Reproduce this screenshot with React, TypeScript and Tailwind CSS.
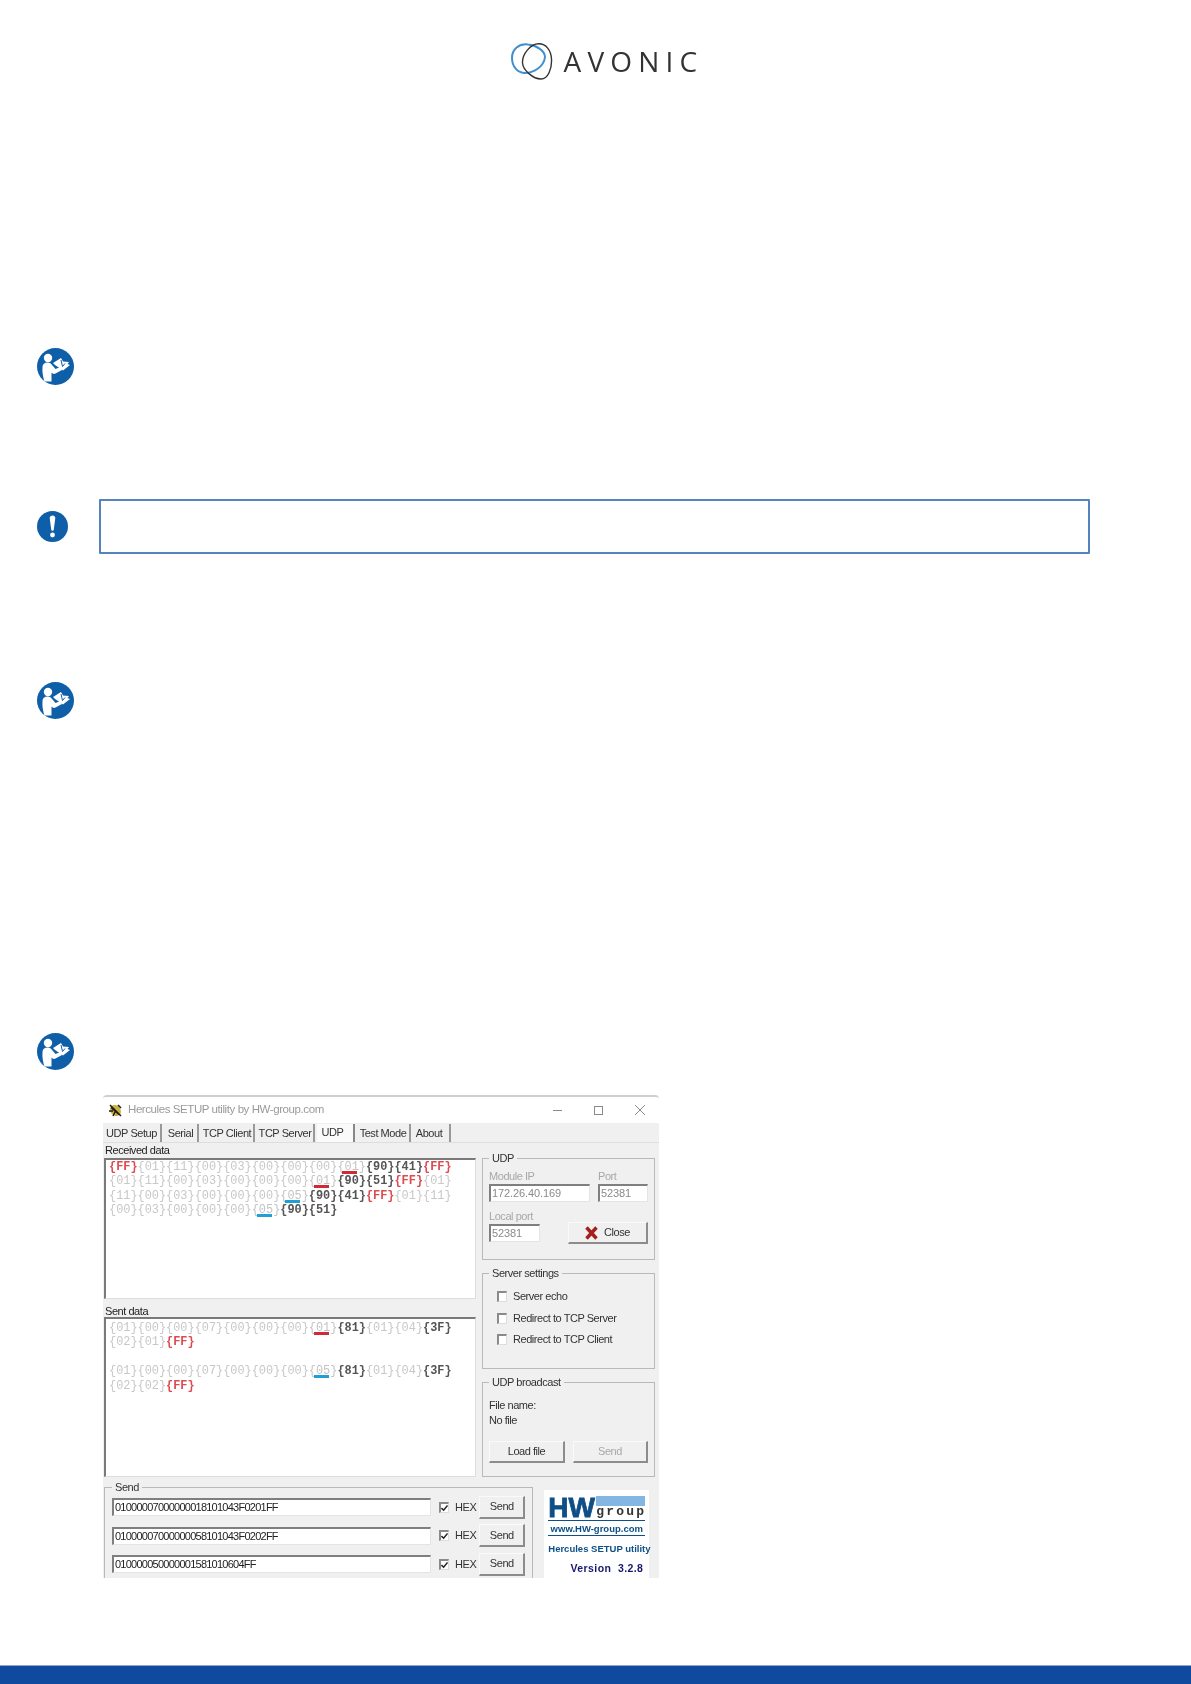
const receivedLines = [
  "r:FF g:01 g:11 g:00 g:03 g:00 g:00 g:00 u:01 d:90 d:41 r:FF",
  "g:01 g:11 g:00 g:03 g:00 g:00 g:00 u:01 d:90 d:51 r:FF g:01",
  "g:11 g:00 g:03 g:00 g:00 g:00 b:05 d:90 d:41 r:FF g:01 g:11",
  "g:00 g:03 g:00 g:00 g:00 b:05 d:90 d:51",
];

const sentLines = [
  "g:01 g:00 g:00 g:07 g:00 g:00 g:00 u:01 d:81 g:01 g:04 d:3F",
  "g:02 g:01 r:FF",
  "",
  "g:01 g:00 g:00 g:07 g:00 g:00 g:00 b:05 d:81 g:01 g:04 d:3F",
  "g:02 g:02 r:FF",
];

const tabs = [
  { label: "UDP Setup", w: "w-[59px]" },
  { label: "Serial", w: "w-[35px]" },
  { label: "TCP Client", w: "w-[54px]" },
  { label: "TCP Server", w: "w-[58px]" },
  { label: "UDP", w: "w-[38px] pr-[5px]", active: true },
  { label: "Test Mode", w: "w-[54px]" },
  { label: "About", w: "w-[38px] pr-[4px]" },
];

const sendRows = ["01000007000000018101043F0201FF", "01000007000000058101043F0202FF", "010000050000001581010604FF"];

function BookIcon() {
  return (
    <svg width="37" height="37" viewBox="0 0 37 37" className="block ml-[37px]">
      <circle cx="18.5" cy="18.5" r="18.5" fill="#0f5ea8" />
      <circle cx="11" cy="10" r="4.200" fill="#fff" />
      <path d="M5.5 19c0-3 2-4.500 5-4.500 2.500 0 3.500 1 5 3l3 3.500 5-2 1.500 3-6.500 3.500c-1.500.8-3 .3-4-1v9h-7c-1.500-4-2.500-10-2-14z" fill="#fff" />
      <path d="M16 15l8-5 2 3.500 6 .5-1.500 2 2.500 1-7 5.500-5-3.500-3-2z" fill="#fff" />
      <path d="M24 12l1.500 6.500M28 15.500l-2.500 3" stroke="#0f5ea8" strokeWidth="1" fill="none" />
    </svg>
  );
}

function WarnIcon() {
  return (
    <svg width="31" height="31" viewBox="0 0 31 31" className="block">
      <circle cx="15.5" cy="15.5" r="15.5" fill="#0f5ea8" />
      <path d="M12.700 7c0-1.600 1.200-2.500 2.800-2.500s2.800.9 2.800 2.500l-1.500 11.500c-.1.9-.6 1.300-1.300 1.300s-1.200-.4-1.300-1.300z" fill="#fff" />
      <circle cx="15.500" cy="24" r="2.400" fill="#fff" />
    </svg>
  );
}

function Logo() {
  return (
    <div className="flex items-center justify-center pl-[23px] gap-[11px] h-[37px] blur-[0.4px]">
      <svg width="42" height="37" viewBox="0 0 42 37" fill="none">
        <path d="M17 1.500C8 .5 1 6 1 15c0 9 6 15 13 15 8 0 19-6 20-16 0-6-9-12-17-12.500z" stroke="#3f8fd0" strokeWidth="2" />
        <path d="M28 .8C20 .5 11 11 11.500 20c.5 7 10.500 16 18.500 16 7 0 11-10 10.500-20C40 7 35 1 28 .8z" stroke="#333" strokeWidth="1.400" />
      </svg>
      <span className="font-['Open_Sans',sans-serif] font-normal text-[28px] leading-none tracking-[6.200px] text-[#333] -translate-y-px">AVONIC</span>
    </div>
  );
}

function HexToken({ token }: { token: string }) {
  const [kind, value] = token.split(":");
  if (kind === "u" || kind === "b") {
    return (
      <span className="relative inline-block text-[#c4c4c4]">
        {`{${value}}`}
        <span className={`absolute left-[5px] top-[11px] w-[15px] h-[3px] ${kind === "u" ? "bg-[#cf2a36]" : "bg-[#1f9fd6]"}`} />
      </span>
    );
  }
  const color = kind === "r" ? "text-[#dd4a50] font-bold" : kind === "d" ? "text-[#555] font-bold" : "text-[#c8c8c8]";
  return <span className={color}>{`{${value}}`}</span>;
}

function HexBox({ lines, className }: { lines: string[]; className: string }) {
  return (
    <div className={`bg-white border-t-2 border-l-2 border-[#7a7a7a] border-r border-b border-r-[#ddd] border-b-[#ddd] pl-[3px] font-['Liberation_Mono',monospace] text-[11.9px] tracking-normal leading-[14.4px] ${className}`}>
      {lines.map((line, i) => (
        <div key={i} className="h-[14.400px] whitespace-pre">
          {line.split(" ").filter(Boolean).map((t, j) => (
            <HexToken key={j} token={t} />
          ))}
        </div>
      ))}
    </div>
  );
}

function Field({ value, className, muted }: { value: string; className: string; muted?: boolean }) {
  return (
    <div className={`bg-white border-t-2 border-l-2 border-[#7f7f7f] border-r border-b border-r-[#e4e4e4] border-b-[#e4e4e4] pl-[1px] leading-[15px] ${muted ? "text-[#8a8a8a] tracking-[-0.1px]" : "text-[#222] tracking-[-0.75px]"} ${className}`}>
      {value}
    </div>
  );
}

function WinButton({ children, className, muted }: { children: React.ReactNode; className: string; muted?: boolean }) {
  return (
    <div className={`flex items-center justify-center bg-[#f0f0f0] border-t border-l border-t-[#fafafa] border-l-[#fafafa] border-r-2 border-b-2 border-[#8c8c8c] ${muted ? "text-[#a8a8a8]" : "text-[#333]"} ${className}`}>
      {children}
    </div>
  );
}

function Check({ label, checked }: { label?: string; checked?: boolean }) {
  return (
    <div className="flex items-center gap-[6px] h-[13px]">
      <div className="w-[10px] h-[11px] bg-white border-t-2 border-l-2 border-[#8a8a8a] border-r border-b border-r-[#ddd] border-b-[#ddd] flex items-center justify-center">
        {checked && (
          <svg width="8" height="8" viewBox="0 0 8 8" fill="none">
            <path d="M.5 4l2.500 2.500L7.500 1" stroke="#222" strokeWidth="1.800" />
          </svg>
        )}
      </div>
      {label && <span>{label}</span>}
    </div>
  );
}

function Group({ title, className, children }: { title: string; className: string; children: React.ReactNode }) {
  return (
    <fieldset className={`border border-[#b9b9b9] ${className}`}>
      <legend className="px-[3px] h-[14px] leading-[14px] text-[#333]">{title}</legend>
      {children}
    </fieldset>
  );
}

function HerculesWindow() {
  return (
    <div className="ml-[103px] mt-[25px] w-[556px] h-[483px] overflow-hidden rounded-t-[4px] border-t-2 border-t-[#cfcfcf] bg-[#f0f0f0] flex flex-col font-['Liberation_Sans',sans-serif] text-[11px] tracking-[-0.45px] blur-[0.35px]">
      <div className="h-[26px] shrink-0 bg-white flex items-center pl-[5px]">
        <svg width="15" height="15" viewBox="0 0 15 15">
          <ellipse cx="7.500" cy="7.500" rx="5" ry="6" fill="#c9b23a" transform="rotate(-40 7.500 7.500)" />
          <path d="M2 2l11 11M1 8h4M10 2l3 3M5 13l3-6M3 4.500l8 7" stroke="#1c1c1c" strokeWidth="1.500" fill="none" />
        </svg>
        <span className="ml-[5px] text-[11.500px] tracking-[-0.42px] text-[#9a9a9a]">Hercules SETUP utility by HW-group.com</span>
        <div className="ml-auto flex items-center pr-[14px] gap-[32px]">
          <div className="w-[9px] h-px bg-[#8a8a8a]" />
          <div className="w-[9px] h-[9px] border border-[#8a8a8a]" />
          <svg width="10" height="10" viewBox="0 0 10 10">
            <path d="M0 0l10 10M10 0L0 10" stroke="#8a8a8a" strokeWidth="1" />
          </svg>
        </div>
      </div>

      <div className="h-[20px] shrink-0 flex items-end gap-[2px] border-b border-[#dedede]">
        {tabs.map((tab) => (
          <div
            key={tab.label}
            className={`${tab.w} h-[18px] flex items-center justify-center whitespace-nowrap border-r-2 ${tab.active ? "bg-[#fafafa] border-[#888] pb-[2px]" : "border-[#999]"} text-[#333]`}
          >
            {tab.label}
          </div>
        ))}
      </div>

      <div className="flex shrink-0 pl-[1px] pr-[3px] h-[337px]">
        <div className="w-[372px] flex flex-col">
          <div className="h-[15px] leading-[15px] pl-[1px] text-[#222]">Received data</div>
          <HexBox lines={receivedLines} className="h-[141px]" />
          <div className="h-[18px] leading-[24px] pl-[1px] text-[#222]">Sent data</div>
          <HexBox lines={sentLines} className="h-[160px] pt-[2px]" />
        </div>
        <div className="ml-[6px] w-[173px] pt-[8px] flex flex-col gap-[6px] text-[#333]">
          <Group title="UDP" className="h-[109px] px-[6px]">
            <div className="flex gap-[8px] mt-[4px]">
              <div className="w-[101px]">
                <div className="h-[15px] leading-[15px] text-[#a8a8a8]">Module IP</div>
                <Field value="172.26.40.169" muted className="h-[18px]" />
              </div>
              <div className="w-[50px]">
                <div className="h-[15px] leading-[15px] text-[#a8a8a8]">Port</div>
                <Field value="52381" muted className="h-[18px]" />
              </div>
            </div>
            <div className="flex items-end justify-between mt-[7px]">
              <div className="w-[51px]">
                <div className="h-[15px] leading-[15px] text-[#a8a8a8]">Local port</div>
                <Field value="52381" muted className="h-[18px]" />
              </div>
              <WinButton className="w-[80px] h-[22px] gap-[6px] mb-[-2px]">
                <svg width="13" height="14" viewBox="0 0 13 14">
                  <path d="M1.500 1.500l10 11M11.500 1.500l-10 11" stroke="#a5201c" strokeWidth="3.400" />
                </svg>
                Close
              </WinButton>
            </div>
          </Group>
          <Group title="Server settings" className="h-[103px] px-[6px]">
            <div className="flex flex-col gap-[8.500px] mt-[10px] pl-[8px]">
              <Check label="Server echo" />
              <Check label="Redirect to TCP Server" />
              <Check label="Redirect to TCP Client" />
            </div>
          </Group>
          <Group title="UDP broadcast" className="h-[102px] px-[6px]">
            <div className="mt-[9px] leading-[15px] text-[#333]">File name:</div>
            <div className="leading-[15px] text-[#333]">No file</div>
            <div className="flex justify-between mt-[13px]">
              <WinButton className="w-[76px] h-[22px]">Load file</WinButton>
              <WinButton muted className="w-[75px] h-[22px]">Send</WinButton>
            </div>
          </Group>
        </div>
      </div>

      <div className="flex pl-[1px] pr-[8px]">
        <Group title="Send" className="w-[428px] h-[110px] px-[7px] text-[#222]">
          <div className="flex flex-col gap-[10.500px] mt-[4px]">
            {sendRows.map((row) => (
              <div key={row} className="flex items-center h-[18px]">
                <Field value={row} className="w-[319px] h-[18px]" />
                <div className="ml-[8px]"><Check checked /></div>
                <span className="ml-[6px] text-[#333]">HEX</span>
                <WinButton className="ml-[3px] w-[46px] h-[23px]">Send</WinButton>
              </div>
            ))}
          </div>
        </Group>
        <div className="ml-[11px] mt-[10px] w-[105px] h-[90px] bg-white flex flex-col px-[4px] pt-[6px] font-bold text-[#0d4f86] tracking-normal">
          <div className="flex h-[25px] items-start border-b border-[#0d4f86]">
            <span className="text-[28px] leading-[24px] w-[49px] [-webkit-text-stroke:0.8px_#0d4f86]">HW</span>
            <div className="flex flex-col w-[49px]">
              <div className="h-[10px] bg-[#84b6e3]" />
              <span className="font-['Liberation_Mono',monospace] text-[13px] leading-[12px] tracking-[2.200px] text-[#333]">group</span>
            </div>
          </div>
          <div className="h-[15px] leading-[16px] text-[9.500px] text-center whitespace-nowrap border-b border-[#0d4f86]">www.HW-group.com</div>
          <div className="mt-[7px] text-[9.500px] leading-[12px] text-center whitespace-nowrap">Hercules SETUP utility</div>
          <div className="mt-[7px] text-[10.500px] leading-[12px] text-right pr-[2px] text-[#16166e] whitespace-nowrap tracking-[0.4px]">Version&nbsp; 3.2.8</div>
        </div>
      </div>
    </div>
  );
}

export default function App() {
  return (
    <div className="h-[1684px] bg-white flex flex-col">
      <div className="pt-[43px]">
        <Logo />
      </div>
      <div className="mt-[268px]">
        <BookIcon />
      </div>
      <div className="mt-[114px] ml-[37px] mr-[101px] flex items-center gap-[31px]">
        <WarnIcon />
        <div className="flex-1 h-[55px] border-2 border-[#5583bd] rounded-[1px]" />
      </div>
      <div className="mt-[128px]">
        <BookIcon />
      </div>
      <div className="mt-[314px]">
        <BookIcon />
      </div>
      <HerculesWindow />
      <div className="mt-auto h-[19px] bg-[#0f4a9e] border-t border-[#8ea6cc]" />
    </div>
  );
}
